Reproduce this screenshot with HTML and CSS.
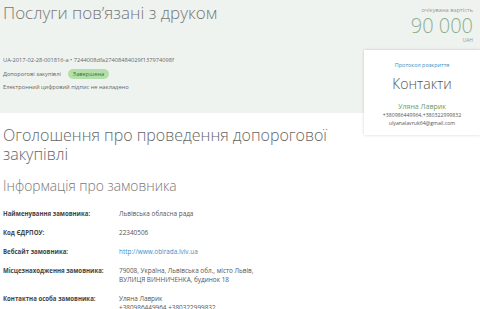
FILE: index.html
```html
<!DOCTYPE html>
<html lang="uk">
<head>
<meta charset="utf-8">
<link rel="stylesheet" href="styles.css">
</head>
<body>
<div class="band">
  <div class="info">
    <h1 class="title">Послуги пов’язані з друком</h1>
    <div class="meta">
      <div class="ids">UA-2017-02-28-001816-a &bull; 7244008dfa27408484029f137974098f</div>
      <div class="type">Допорогові закупівлі <span class="badge">Завершена</span></div>
      <div class="sign">Електронний цифровий підпис не накладено</div>
    </div>
  </div>
  <div class="price">
    <div class="price-label">очікувана вартість</div>
    <div class="price-value">90 000</div>
    <div class="price-cur">UAH</div>
  </div>
</div>
<div class="main">
  <div class="content">
    <h2 class="heading">Оголошення про проведення допорогової закупівлі</h2>
    <h3 class="subheading">Інформація про замовника</h3>
    <div class="table">
      <div class="row"><div class="label">Найменування замовника:</div><div class="value">Львівська обласна рада</div></div>
      <div class="row"><div class="label">Код ЄДРПОУ:</div><div class="value">22340506</div></div>
      <div class="row"><div class="label">Вебсайт замовника:</div><div class="value"><a class="link" href="#">http://www.oblrada.lviv.ua</a></div></div>
      <div class="row"><div class="label">Місцезнаходження замовника:</div><div class="value">79008, Україна, Львівська обл., місто Львів,<br>ВУЛИЦЯ ВИННИЧЕНКА, будинок 18</div></div>
      <div class="row"><div class="label">Контактна особа замовника:</div><div class="value">Уляна Лаврик<br>+380986449964,+380322999832</div></div>
    </div>
  </div>
  <div class="aside">
    <div class="card">
      <a class="card-link" href="#">Протокол розкриття</a>
      <div class="card-title">Контакти</div>
      <div class="card-name">Уляна Лаврик</div>
      <div class="card-line">+380986449964,+380322999832</div>
      <div class="card-line">ulyanalavruk64@gmail.com</div>
    </div>
  </div>
</div>
</body>
</html>
```
FILE: styles.css
```css
html, body {
  margin: 0;
  padding: 0;
  background: #ffffff;
  overflow: hidden;
}
body {
  font-family: "Open Sans", "Liberation Sans", sans-serif;
  color: #555;
  width: 480px;
}
.band {
  background: #eef3ef;
  height: 113px;
  display: flex;
  justify-content: space-between;
  padding: 0 7px 0 3px;
  box-sizing: border-box;
}
.title {
  margin: 0;
  padding-top: 1px;
  font-weight: 300;
  font-size: 17px;
  font-stretch: 95%;
  line-height: 23px;
  color: #777;
}
.meta {
  margin-top: 32px;
  font-size: 5.7px;
  color: #666;
}
.ids {
  line-height: 8px;
}
.type {
  margin-top: 5px;
  line-height: 10px;
  display: flex;
  align-items: center;
  gap: 7px;
}
.badge {
  background: #b3e0aa;
  color: #3c6e35;
  border-radius: 5px;
  padding: 1px 5px;
  line-height: 8px;
}
.sign {
  margin-top: 4px;
  line-height: 8px;
}
.price {
  text-align: right;
  padding-top: 6px;
}
.price-label {
  font-size: 5.7px;
  line-height: 9px;
  color: #999;
}
.price-value {
  font-size: 20px;
  font-weight: 300;
  font-stretch: 92%;
  line-height: 22px;
  color: #8fae8e;
}
.price-cur {
  font-size: 5px;
  line-height: 7px;
  color: #999;
}
.main {
  display: flex;
}
.content {
  width: 361px;
  padding-left: 3px;
  box-sizing: border-box;
}
.heading {
  margin: 13px 0 0;
  font-weight: 300;
  font-size: 16px;
  font-stretch: 92%;
  line-height: 19px;
  color: #666;
}
.subheading {
  margin: 12px 0 0;
  font-weight: 300;
  font-size: 13.8px;
  font-stretch: 88%;
  line-height: 20px;
  color: #777;
}
.table {
  margin-top: 8px;
  font-size: 6.1px;
  line-height: 9px;
}
.row {
  display: flex;
  padding: 5px 0;
  min-height: 9px;
}
.label {
  width: 116px;
  font-weight: 700;
  color: #444;
}
.value {
  color: #555;
  font-size: 6.4px;
}
.link {
  color: #3a8fc4;
  text-decoration: none;
}
.aside {
  flex: 1;
  margin-top: -63px;
  position: relative;
}
.card {
  background: #fff;
  box-shadow: 0 0 3px rgba(0,0,0,0.18);
  text-align: center;
  padding: 11px 0 6px;
  height: 85px;
  box-sizing: border-box;
  margin-left: 3px;
}
.card-link {
  display: block;
  font-size: 5.5px;
  line-height: 8px;
  color: #3a8fc4;
  text-decoration: none;
}
.card-title {
  font-size: 14px;
  font-weight: 300;
  line-height: 20px;
  color: #555;
  margin-top: 5px;
}
.card-name {
  margin-top: 8px;
  font-size: 7px;
  line-height: 10px;
  color: #6b9b62;
}
.card-line {
  font-size: 5.2px;
  line-height: 7.5px;
  color: #555;
}
```
